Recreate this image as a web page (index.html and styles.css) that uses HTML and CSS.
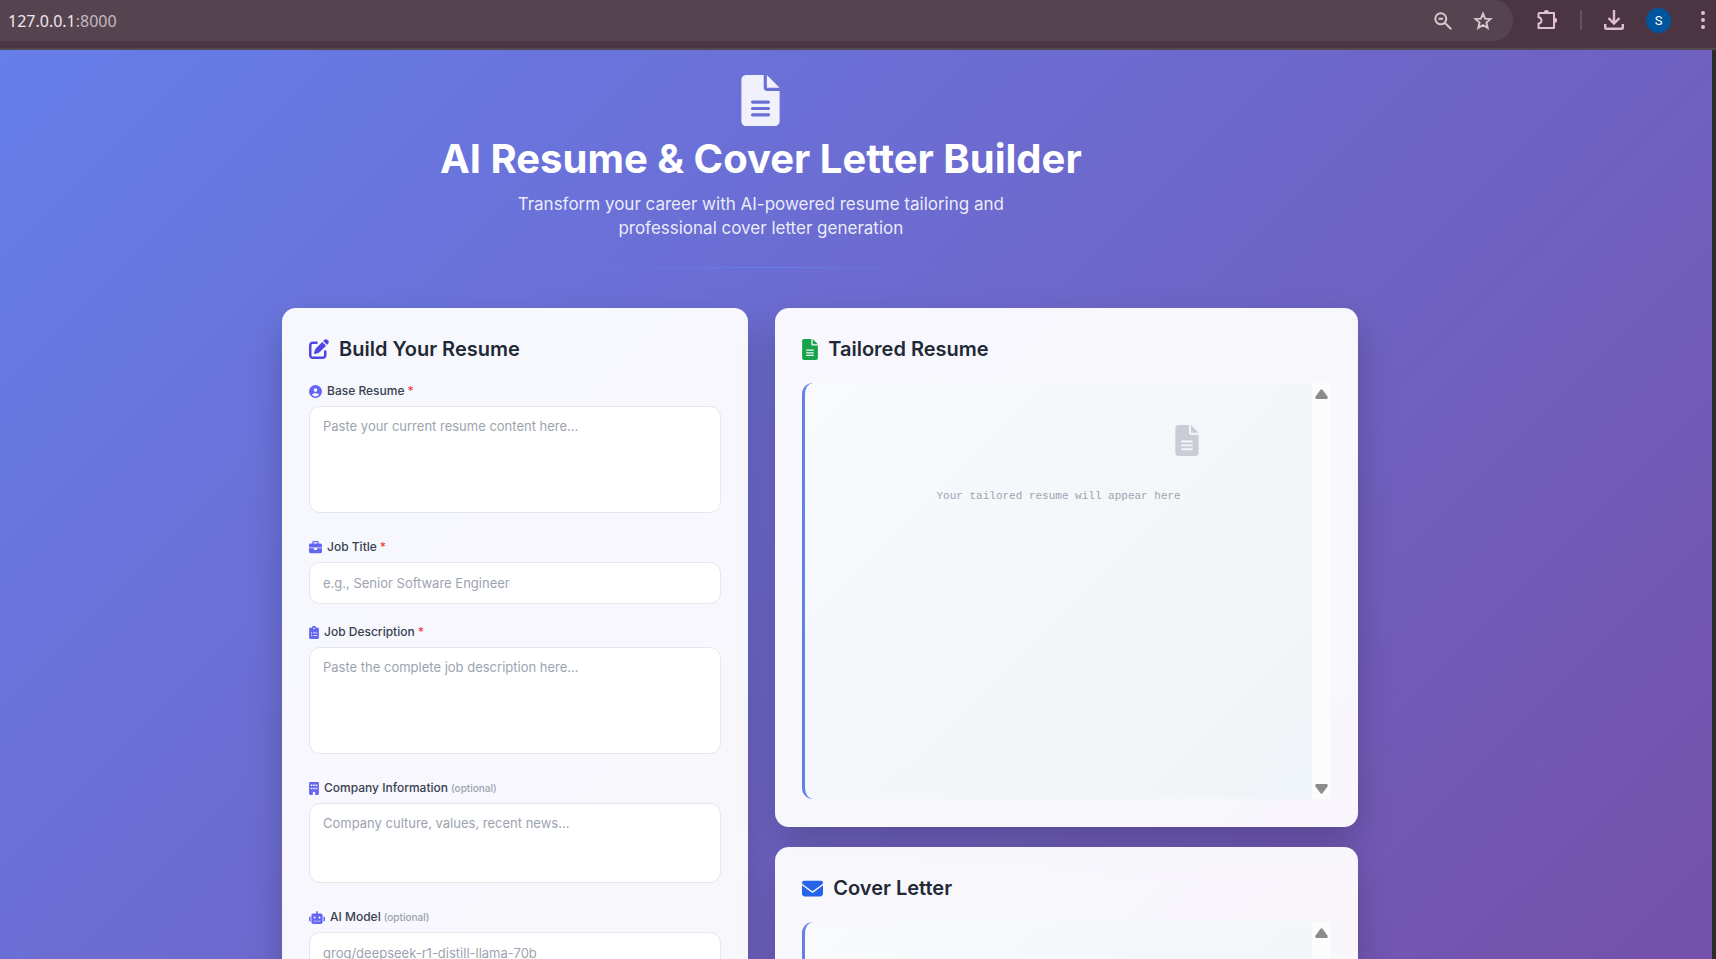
FILE: index.html
```html
<!DOCTYPE html>
<html lang="en">
<head>
<meta charset="utf-8">
<title>AI Resume &amp; Cover Letter Builder</title>
<link rel="stylesheet" href="styles.css">
</head>
<body>
<svg width="0" height="0" class="sprite" aria-hidden="true">
  <symbol id="file" viewBox="0 0 384 512"><path d="M256 0v128h128L256 0zM224 128L224 0H48C21.49 0 0 21.49 0 48v416C0 490.5 21.49 512 48 512h288c26.51 0 48-21.49 48-48V160h-127.1C238.3 160 224 145.7 224 128zM272 416h-160C103.2 416 96 408.8 96 400C96 391.2 103.2 384 112 384h160c8.836 0 16 7.162 16 16C288 408.8 280.8 416 272 416zM272 352h-160C103.2 352 96 344.8 96 336C96 327.2 103.2 320 112 320h160c8.836 0 16 7.162 16 16C288 344.8 280.8 352 272 352zM288 272C288 280.8 280.8 288 272 288h-160C103.2 288 96 280.8 96 272C96 263.2 103.2 256 112 256h160C280.8 256 288 263.2 288 272z"/></symbol>
  <symbol id="up" viewBox="0 0 13 10"><path d="M5.3 .9Q6.5-.6 7.700 .9L12.500 7.600Q13.300 9.900 11.300 10H1.700Q-.3 9.900 .5 7.600Z"/></symbol>
</svg>

<div class="toolbar">
  <div class="omnibox">
    <span class="url">127.0.0.1<span class="port">:8000</span></span>
    <button class="tool" type="button" aria-label="Zoom"><svg width="18" height="18" viewBox="0 0 18 18" fill="none" stroke="currentColor" stroke-width="2"><circle cx="6.800" cy="6.800" r="5.500"/><path d="M11 11l6.300 6.300M4.500 6.800h4.600"/></svg></button>
    <button class="tool" type="button" aria-label="Bookmark"><svg width="20" height="20" viewBox="0 0 20 20" fill="none" stroke="currentColor" stroke-width="1.900"><path d="M10 2.600l2.100 5 5.400.5-4.100 3.500 1.300 5.300-4.700-2.900-4.700 2.900 1.300-5.300-4.100-3.500 5.400-.5z"/></svg></button>
  </div>
  <div class="actions">
    <button class="tool" type="button" aria-label="Extensions"><svg width="22" height="22" viewBox="0 0 22 22"><path d="M3.500 4H18v15H2.500V14.600q3-.6 3-3.200t-3-3.200V5q0-1 1-1z" fill="none" stroke="currentColor" stroke-width="2" stroke-linejoin="round"/><path d="M7.800 3.500a2.600 2.600 0 0 1 5.200 0zM18.500 8.700a2.600 2.600 0 0 1 0 5.200z" fill="currentColor"/></svg></button>
    <span class="divider"></span>
    <button class="tool" type="button" aria-label="Downloads"><svg width="20" height="20" viewBox="0 0 20 20" fill="none" stroke="currentColor" stroke-width="2.400"><path d="M10 0v13M4.500 8l5.500 5.500L15.500 8M1.200 14v3.500q0 1.300 1.300 1.300h15q1.300 0 1.300-1.300V14"/></svg></button>
    <button class="avatar" type="button">S</button>
    <button class="tool" type="button" aria-label="Menu"><svg width="4" height="18" viewBox="0 0 4 18" fill="currentColor"><circle cx="2" cy="2" r="2"/><circle cx="2" cy="9" r="2"/><circle cx="2" cy="16" r="2"/></svg></button>
  </div>
</div>

<main class="page">
  <div class="container">
    <header class="hero">
      <svg class="hero-icon" width="39" height="51"><use href="#file"/></svg>
      <h1>AI Resume &amp; Cover Letter Builder</h1>
      <p>Transform your career with AI-powered resume tailoring and professional cover letter generation</p>
      <div class="rule"></div>
    </header>

    <div class="columns">
      <section class="card">
        <h2><svg class="indigo" width="20" height="20" viewBox="0 0 512 512"><path d="M471.600 21.700c-21.900-21.900-57.300-21.900-79.200 0L362.300 51.700l97.900 97.900 30.100-30.100c21.900-21.900 21.900-57.300 0-79.200L471.600 21.700zm-299.200 220c-6.100 6.100-10.800 13.600-13.500 21.900l-29.600 88.800c-2.900 8.600-.6 18.100 5.800 24.600s15.900 8.700 24.600 5.800l88.800-29.600c8.200-2.700 15.700-7.400 21.900-13.500L437.700 172.300 339.700 74.300 172.400 241.700zM96 64C43 64 0 107 0 160V416c0 53 43 96 96 96H352c53 0 96-43 96-96V320c0-17.700-14.300-32-32-32s-32 14.300-32 32v96c0 17.700-14.300 32-32 32H96c-17.700 0-32-14.300-32-32V160c0-17.700 14.300-32 32-32h96c17.700 0 32-14.300 32-32s-14.300-32-32-32H96z"/></svg>Build Your Resume</h2>
        <form>
          <div class="field long">
            <label for="resume"><svg width="13" height="13" viewBox="0 0 512 512"><path fill-rule="evenodd" d="M256 0a256 256 0 1 0 0 512 256 256 0 1 0 0-512zM256 128a72 72 0 1 1 0 144 72 72 0 1 1 0-144zM256 448c-53 0-101-21.500-135.700-56.300C136.800 348.800 169 320 208 320h96c39 0 71.200 28.800 87.700 71.700C357 426.500 309 448 256 448z"/></svg>Base Resume <span class="required">*</span></label>
            <textarea id="resume" class="tall" placeholder="Paste your current resume content here..."></textarea>
          </div>
          <div class="field">
            <label for="title"><svg width="13" height="13" viewBox="0 0 512 512"><path d="M184 48H328c4.400 0 8 3.600 8 8V96H176V56c0-4.400 3.600-8 8-8zm-56 8V96H64C28.700 96 0 124.700 0 160v96H512V160c0-35.300-28.700-64-64-64H384V56c0-30.900-25.100-56-56-56H184c-30.900 0-56 25.100-56 56zM512 288H320v32c0 17.700-14.300 32-32 32H224c-17.700 0-32-14.300-32-32V288H0V416c0 35.300 28.700 64 64 64H448c35.300 0 64-28.700 64-64V288z"/></svg>Job Title <span class="required">*</span></label>
            <input id="title" type="text" placeholder="e.g., Senior Software Engineer">
          </div>
          <div class="field long">
            <label for="description"><svg width="10" height="13" viewBox="0 0 384 512"><path fill-rule="evenodd" d="M192 0c-41.800 0-77.400 26.700-90.500 64H48C21.500 64 0 85.500 0 112V464c0 26.500 21.500 48 48 48H336c26.500 0 48-21.500 48-48V112c0-26.500-21.500-48-48-48H282.500C269.400 26.700 233.800 0 192 0zM192 64a32 32 0 1 1 0 64 32 32 0 1 1 0-64zM96 248a24 24 0 1 1 0 48 24 24 0 1 1 0-48zM160 256H320V288H160zM96 344a24 24 0 1 1 0 48 24 24 0 1 1 0-48zM160 352H320V384H160z"/></svg>Job Description <span class="required">*</span></label>
            <textarea id="description" class="tall" placeholder="Paste the complete job description here..."></textarea>
          </div>
          <div class="field long">
            <label for="company"><svg width="10" height="13" viewBox="0 0 384 512"><path fill-rule="evenodd" d="M48 0C21.500 0 0 21.500 0 48V464c0 26.500 21.500 48 48 48h96V432a48 48 0 0 1 96 0v80h96c26.500 0 48-21.500 48-48V48c0-26.500-21.500-48-48-48H48zM64 96h64v64H64zM160 96h64v64h-64zM256 96h64v64h-64zM64 224h64v64H64zM160 224h64v64h-64zM256 224h64v64h-64z"/></svg>Company Information <span class="optional">(optional)</span></label>
            <textarea id="company" class="short" placeholder="Company culture, values, recent news..."></textarea>
          </div>
          <div class="field">
            <label for="model"><svg width="16" height="13" viewBox="0 0 640 512"><path fill-rule="evenodd" d="M320 0c17.700 0 32 14.300 32 32V96H472c39.800 0 72 32.200 72 72V440c0 39.800-32.200 72-72 72H168c-39.800 0-72-32.200-72-72V168c0-39.800 32.200-72 72-72H288V32c0-17.700 14.300-32 32-32zM192 384V416H256V384zM288 384V416H352V384zM384 384V416H448V384zM224 216a40 40 0 1 0 0 80 40 40 0 1 0 0-80zM416 216a40 40 0 1 0 0 80 40 40 0 1 0 0-80zM48 224H64V416H48c-26.500 0-48-21.500-48-48V272c0-26.500 21.500-48 48-48zm544 0c26.500 0 48 21.500 48 48v96c0 26.500-21.500 48-48 48H576V224h16z"/></svg>AI Model <span class="optional">(optional)</span></label>
            <input id="model" type="text" placeholder="groq/deepseek-r1-distill-llama-70b">
          </div>
        </form>
      </section>

      <div class="results">
        <section class="card">
          <h2><svg class="green" width="16" height="21"><use href="#file"/></svg>Tailored Resume</h2>
          <div class="output">
            <div class="empty">
              <svg width="24" height="31"><use href="#file"/></svg>
              <p>Your tailored resume will appear here</p>
            </div>
            <div class="track"><svg width="13" height="10"><use href="#up"/></svg><svg class="down" width="13" height="10"><use href="#up"/></svg></div>
          </div>
        </section>
        <section class="card">
          <h2><svg class="blue" width="21" height="21" viewBox="0 0 512 512"><path d="M48 64C21.500 64 0 85.500 0 112c0 15.100 7.100 29.300 19.200 38.400L236.800 313.600c11.400 8.500 27 8.500 38.400 0L492.800 150.400c12.100-9.100 19.200-23.300 19.200-38.400c0-26.500-21.500-48-48-48H48zM0 176V384c0 35.300 28.700 64 64 64H448c35.300 0 64-28.700 64-64V176L294.400 339.200c-22.800 17.100-54 17.100-76.800 0L0 176z"/></svg>Cover Letter</h2>
          <div class="output">
            <div class="empty"></div>
            <div class="track"><svg width="13" height="10"><use href="#up"/></svg><svg class="down" width="13" height="10"><use href="#up"/></svg></div>
          </div>
        </section>
      </div>
    </div>
  </div>
</main>
</body>
</html>
```
FILE: styles.css
```css
* { box-sizing: border-box; }

body {
  margin: 0;
  height: 100vh;
  display: flex;
  flex-direction: column;
  overflow: hidden;
  font-family: Inter, "Liberation Sans", sans-serif;
}

h1, h2, p { margin: 0; }
svg { display: block; flex: none; }
.sprite { position: absolute; }

/* Browser toolbar */
.toolbar {
  flex: none;
  display: flex;
  height: 50px;
  background: #4b3543;
  border-bottom: 2px solid #54494f;
}

.omnibox {
  flex: 1;
  display: flex;
  align-items: center;
  gap: 21px;
  height: 41px;
  padding: 0 20px 0 8px;
  background: #55444f;
  border-radius: 0 20px 20px 0;
  color: #d5c8ce;
}

.url {
  flex: 1;
  font: 16px "Noto Sans", sans-serif;
  color: #f0e6ec;
}

.port { color: #c6b9c0; }

.tool {
  padding: 0;
  border: 0;
  background: none;
  color: inherit;
}

.actions {
  display: flex;
  align-items: center;
  height: 40px;
  gap: 22px;
  padding: 0 11px 0 23px;
  color: #e0bfd3;
}

.divider {
  width: 2px;
  height: 20px;
  background: #66505e;
}

.avatar {
  width: 25px;
  height: 25px;
  padding: 0;
  border: 0;
  border-radius: 50%;
  background: #00569c;
  color: #fff;
  font: 13px Roboto, sans-serif;
}

.actions .tool:last-child { margin-left: 8px; }

/* Page */
.page {
  flex: 1;
  min-height: 0;
  overflow: hidden;
  border-right: 4px solid #2b2b2b;
  background: linear-gradient(135deg, #667eea 0%, #764ba2 100%) no-repeat;
  background-size: 100% 1250px;
}

.container {
  width: 63%;
  min-width: 900px;
  max-width: 1076px;
  margin-left: 282px;
}

.hero {
  display: flex;
  flex-direction: column;
  align-items: center;
  width: 89%;
  padding-top: 25px;
  text-align: center;
  color: #fff;
}

.hero-icon { fill: rgba(255, 255, 255, 0.9); }

.hero h1 {
  margin-top: 10px;
  font-size: 40px;
  font-weight: 700;
  line-height: 46px;
  white-space: nowrap;
}

.hero p {
  max-width: 520px;
  margin-top: 10px;
  font-size: 17px;
  line-height: 24px;
  color: rgba(255, 255, 255, 0.88);
}

.rule {
  width: 400px;
  height: 1px;
  margin: 27px 0 40px;
  background: linear-gradient(90deg, transparent, #667eea, transparent);
}

.columns {
  display: grid;
  grid-template-columns: 4fr 5fr;
  gap: 27px;
  align-items: start;
}

.results {
  display: grid;
  gap: 20px;
}

.card {
  padding: 27px 27px 28px;
  border-radius: 14px;
  background: rgba(255, 255, 255, 0.95);
  box-shadow: 0 18px 36px rgba(0, 0, 0, 0.2);
}

.card h2 {
  display: flex;
  align-items: center;
  gap: 10px;
  margin-bottom: 18px;
  font-size: 20px;
  font-weight: 600;
  line-height: 28px;
  color: #1f2937;
}

.indigo { fill: #4f46e5; }
.green { fill: #16a34a; }
.blue { fill: #2563eb; }

/* Form */
.field { margin-bottom: 18px; }
.field.long { margin-bottom: 24px; }

.field label {
  display: flex;
  align-items: center;
  gap: 3px;
  margin-bottom: 5px;
  font-size: 12px;
  font-weight: 500;
  line-height: 20px;
  color: #374151;
}

.field label svg {
  margin-right: 2px;
  fill: #6366f1;
}

.required { color: #ef4444; }
.optional { font-size: 10px; color: #9ca3af; }

.field input,
.field textarea {
  display: block;
  width: 100%;
  padding: 9px 13px;
  border: 1px solid #e5e7eb;
  border-radius: 11px;
  background: #fff;
  font: 13px/20px Inter, sans-serif;
  color: #1f2937;
  resize: none;
}

.field input { height: 42px; }
.tall { height: 107px; }
.short { height: 80px; }

.field ::placeholder {
  color: #9ca3af;
  opacity: 1;
}

/* Output */
.results h2 { margin-bottom: 20px; }

.output {
  display: flex;
  height: 416px;
  border-left: 3px solid #667eea;
  border-radius: 11px 0 0 11px;
  background: linear-gradient(135deg, #f8fafc, #eff4f8);
}

.empty {
  flex: 1;
  display: flex;
  flex-direction: column;
  align-items: center;
  gap: 32px;
  padding-top: 42px;
}

.empty svg {
  margin-left: 256px;
  fill: #c8cdd6;
}

.empty p {
  font: 11px/16px "Liberation Mono", monospace;
  color: #9ca3af;
}

.track {
  display: flex;
  flex-direction: column;
  justify-content: space-between;
  align-items: center;
  width: 19px;
  padding: 6px 0 5px;
  background: #fcfcfc;
  fill: #8b8b8b;
}

.down { transform: rotate(180deg); }
```
